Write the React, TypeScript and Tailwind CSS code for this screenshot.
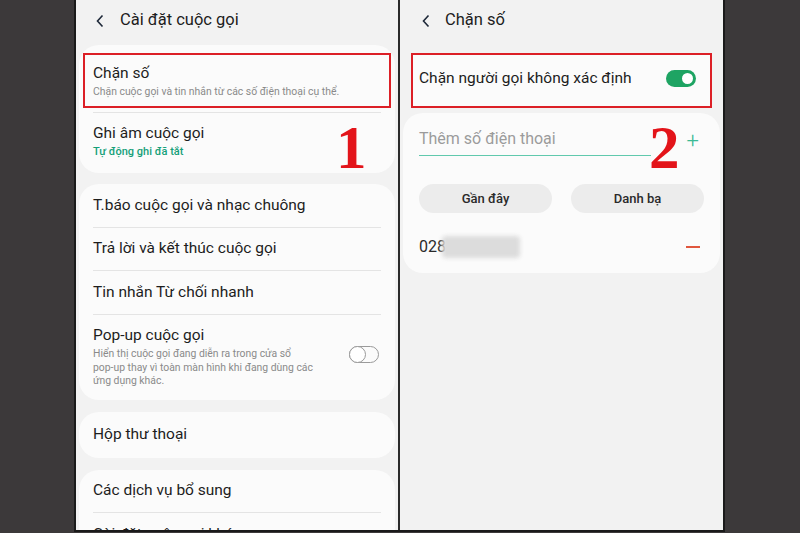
import React from 'react';

const font = { fontFamily: 'Roboto, "Noto Sans", "Liberation Sans", sans-serif' };

const Back = () => (
  <svg width="10" height="14" viewBox="0 0 10 14" className="text-gray-800">
    <path d="M7.5 1.5 L2.5 7 L7.5 12.5" fill="none" stroke="currentColor" strokeWidth="1.6" />
  </svg>
);

const Toggle: React.FC<{ on?: boolean }> = ({ on }) =>
  on ? (
    <div className="w-[30px] h-[17px] rounded-full bg-[#1ea463] flex items-center justify-end px-[1px]">
      <div className="w-[15px] h-[15px] rounded-full bg-white border-2 border-[#1ea463]" />
    </div>
  ) : (
    <div className="w-[30px] h-[17px] rounded-full border-[1.5px] border-[#9a9a9a] flex items-center">
      <div className="w-[17px] h-[17px] -ml-[1.5px] rounded-full border-[1.5px] border-[#9a9a9a] bg-white" />
    </div>
  );

const Row: React.FC<{ title: string; last?: boolean; h?: string }> = ({ title, last, h = 'h-[43px]' }) => (
  <div className={`${h} flex items-center ${last ? '' : 'border-b border-[#e4e4e4]'}`}>
    <span className="text-[15.5px] text-[#1d1d1d]">{title}</span>
  </div>
);

const Big: React.FC<{ n: string; className: string }> = ({ n, className }) => (
  <span
    className={`absolute text-[61px] leading-none font-bold text-[#e3141a] ${className}`}
    style={{ fontFamily: '"Liberation Serif", serif' }}
  >
    {n}
  </span>
);

export default function App() {
  return (
    <div className="w-[800px] h-[533px] bg-[#3c393a] flex overflow-hidden" style={font}>
      <div className="w-[74px] shrink-0" />
      <div className="h-[532px] flex border-l-2 border-b-2 border-r-2 border-[#1a1a1a]">
        {/* Left screen */}
        <div className="w-[322px] h-full bg-[#f2f2f2] flex flex-col overflow-hidden relative">
          <div className="h-[45px] shrink-0 flex items-center pl-[19px] gap-[15px] pb-[4px]">
            <Back />
            <span className="text-[16.5px] text-[#1d1d1d]">Cài đặt cuộc gọi</span>
          </div>
          <div className="shrink-0 mx-[3px] bg-[#fbfbfb] rounded-[20px] px-[14px] pt-[8px] relative">
            <div className="-mx-[10px] h-[55px] border-2 border-[#dc1f26] px-[8px] flex flex-col justify-center">
              <span className="text-[15.5px] text-[#1d1d1d] leading-[20px]">Chặn số</span>
              <span className="text-[10.4px] text-[#8a8a8a] leading-[14px] mt-[2px]">
                Chặn cuộc gọi và tin nhắn từ các số điện thoại cụ thể.
              </span>
            </div>
            <div className="border-t border-[#e4e4e4] mt-[4px]" />
            <div className="h-[60px] flex flex-col justify-center pb-[4px]">
              <span className="text-[15.5px] text-[#1d1d1d] leading-[21px]">Ghi âm cuộc gọi</span>
              <span className="text-[11px] text-[#15a079] font-medium leading-[16px]">Tự động ghi đã tắt</span>
            </div>
            <Big n="1" className="left-[257px] top-[72px]" />
          </div>
          <div className="shrink-0 mx-[3px] mt-[11px] bg-[#fbfbfb] rounded-[20px] px-[14px]">
            <Row title="T.báo cuộc gọi và nhạc chuông" h="h-[44px]" />
            <Row title="Trả lời và kết thúc cuộc gọi" />
            <Row title="Tin nhắn Từ chối nhanh" h="h-[44px]" />
            <div className="flex items-center h-[85px] pb-[2px]">
              <div className="flex-1 flex flex-col">
                <span className="text-[15.5px] text-[#1d1d1d] leading-[21px]">Pop-up cuộc gọi</span>
                <span className="text-[10.4px] text-[#8a8a8a] leading-[13.5px] mt-[1px] whitespace-nowrap">
                  Hiển thị cuộc gọi đang diễn ra trong cửa sổ
                  <br />
                  pop-up thay vì toàn màn hình khi đang dùng các
                  <br />
                  ứng dụng khác.
                </span>
              </div>
              <div className="pr-[2px] pb-[4px]">
                <Toggle />
              </div>
            </div>
          </div>
          <div className="shrink-0 mx-[3px] mt-[12px] bg-[#fbfbfb] rounded-[20px] px-[14px]">
            <Row title="Hộp thư thoại" h="h-[46px]" last />
          </div>
          <div className="shrink-0 mx-[3px] mt-[12px] bg-[#fbfbfb] rounded-[20px] px-[14px]">
            <Row title="Các dịch vụ bổ sung" />
            <Row title="Cài đặt cuộc gọi khác" last />
          </div>
        </div>
        <div className="w-[2px] bg-[#2a2a2a]" />
        {/* Right screen */}
        <div className="w-[323px] h-full bg-[#f2f2f2] flex flex-col relative">
          <div className="h-[45px] shrink-0 flex items-center pl-[21px] gap-[14px] pb-[4px]">
            <Back />
            <span className="text-[16.5px] text-[#1d1d1d]">Chặn số</span>
          </div>
          <div className="shrink-0 mx-[11px] mt-[8px] h-[55px] border-2 border-[#dc1f26] bg-[#fbfbfb] flex items-center pl-[6px] pr-[14px] pb-[4px]">
            <span className="flex-1 text-[15.5px] text-[#1d1d1d]">Chặn người gọi không xác định</span>
            <Toggle on />
          </div>
          <div className="shrink-0 mx-[3px] mt-[5px] bg-[#fbfbfb] rounded-[20px] px-[16px] pt-[14px] pb-[12px] relative">
            <div className="flex items-end">
              <div className="w-[232px] border-b-[1.5px] border-[#60c9ad] pb-[4px]">
                <span className="text-[16px] text-[#9b9b9b]">Thêm số điện thoại</span>
              </div>
              <span className="ml-auto mr-[5px] mb-[4px] text-[22px] leading-none font-light text-[#3aba95]">+</span>
            </div>
            <Big n="2" className="left-[246px] top-[4px]" />
            <div className="flex gap-[19px] mt-[28px]">
              <div className="w-[135px] h-[29px] rounded-full bg-[#ececec] flex items-center justify-center text-[13px] font-medium text-[#2a2a2a]">
                Gần đây
              </div>
              <div className="w-[135px] h-[29px] rounded-full bg-[#ececec] flex items-center justify-center text-[13px] font-medium text-[#2a2a2a]">
                Danh bạ
              </div>
            </div>
            <div className="flex items-center mt-[20px] h-[28px]">
              <span className="text-[16px] text-[#2a2a2a]">028</span>
              <div className="-ml-[4px] w-[78px] h-[22px] bg-[#dcdcdc] blur-[2px] rounded-sm" />
              <div className="ml-auto mr-[4px] w-[14px] h-[2px] bg-[#e0573e]" />
            </div>
          </div>
        </div>
      </div>
    </div>
  );
}
